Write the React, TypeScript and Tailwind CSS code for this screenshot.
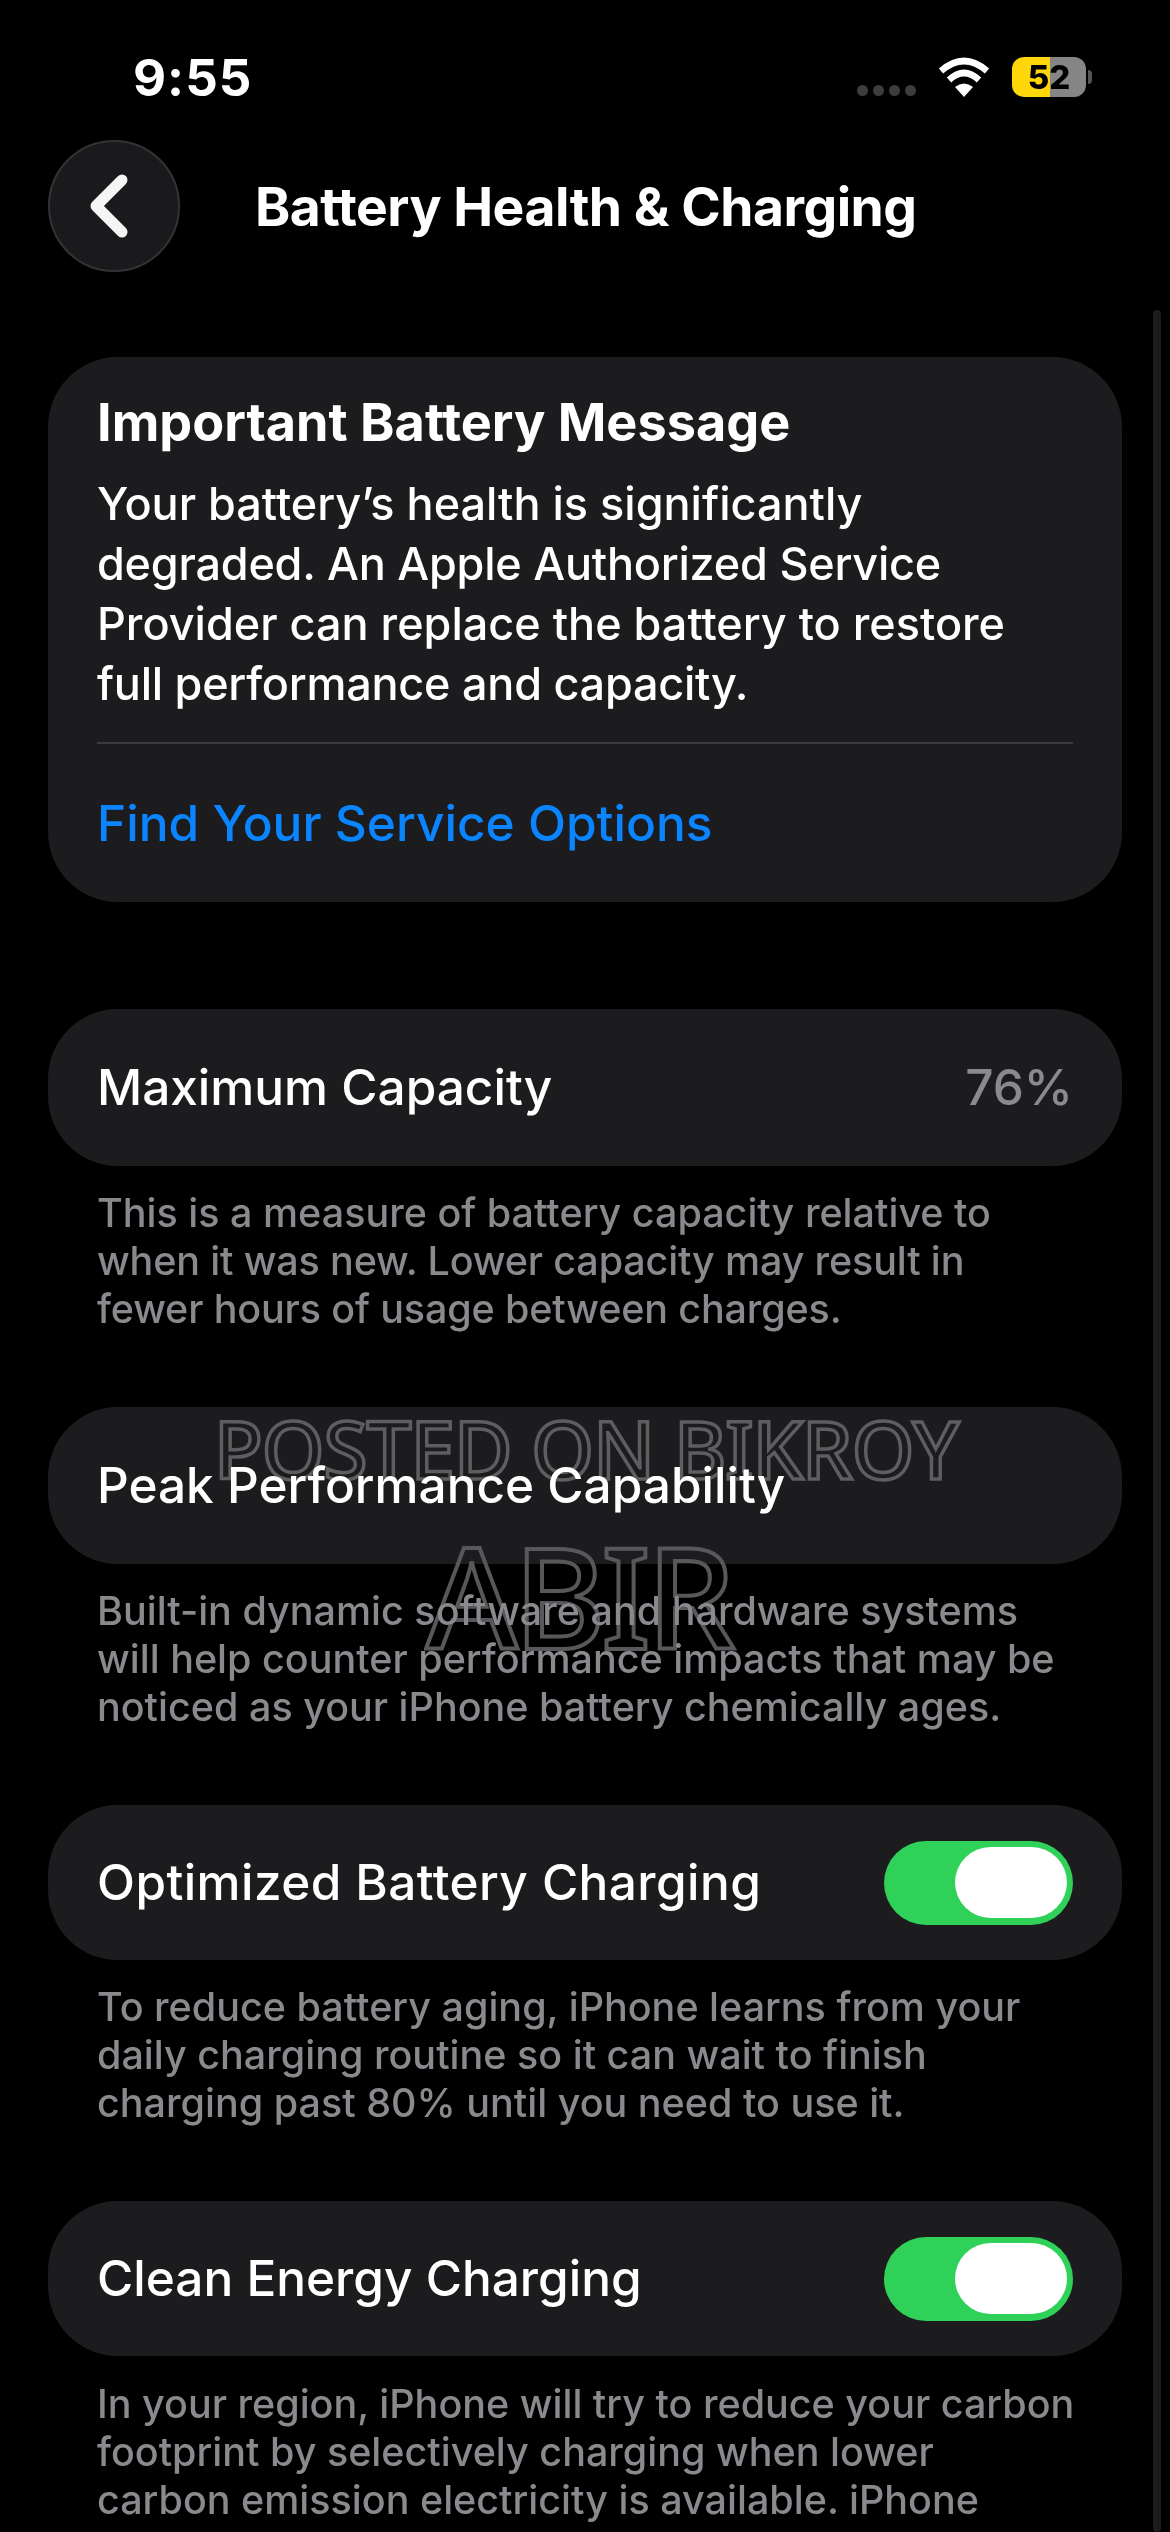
export default function App() {
  const card = "mx-12 rounded-[70px] bg-[#1c1c1e]";
  const foot = "mx-12 whitespace-nowrap px-[49px] text-[39.5px] leading-[48px] text-[#8a8a8e] font-medium";
  const Toggle = () => (
    <div className="flex h-[84px] w-[189px] items-center justify-end rounded-full bg-[#30d158] pr-[6px]">
      <div className="h-[71px] w-[112px] rounded-full bg-white" />
    </div>
  );
  return (
    <div className="relative h-[2532px] w-[1170px] overflow-hidden bg-black font-['Inter','Liberation_Sans',sans-serif] text-white">
      {/* status bar */}
      <div className="flex h-[140px] items-start justify-between pl-[133px] pr-[78px] pt-[50px]">
        <span className="text-[51px] font-bold leading-[56px] tracking-[1px]">9:55</span>
        <div className="flex items-center pt-[7px]">
          <div className="mt-[26px] mr-[22px] flex gap-[5px]">
            {[0, 1, 2, 3].map((i) => (
              <div key={i} className="h-[11px] w-[11px] rounded-full bg-[#3d3d3d]" />
            ))}
          </div>
          <svg width="52" height="40" viewBox="0 0 52 40" className="mr-[22px]">
            <path d="M26 40 L17 30 Q26 23 35 30 Z" fill="#fff" />
            <path d="M11 23 Q26 9 41 23" fill="none" stroke="#fff" strokeWidth="6.5" />
            <path d="M3 14 Q26 -6 49 14" fill="none" stroke="#fff" strokeWidth="6.5" />
          </svg>
          <div className="relative flex h-[40px] w-[74px] items-center justify-center overflow-hidden rounded-[12px] bg-[linear-gradient(90deg,#ffd60a_0%,#ffd60a_52%,#858585_52%,#858585_100%)]">
            <span className="text-[33px] font-extrabold leading-none text-black">52</span>
          </div>
          <div className="ml-[2px] h-[14px] w-[4px] rounded-r-full bg-[#555]" />
        </div>
      </div>
      {/* header */}
      <div className="flex h-[132px] items-center pl-12">
        <div className="flex h-[132px] w-[132px] items-center justify-center rounded-full border-[2px] border-[#333335] bg-[#1a1a1c]">
          <svg width="44" height="64" viewBox="0 0 44 64" className="mr-[8px]">
            <path d="M34 6 L8 32 L34 58" fill="none" stroke="#f5f5f5" strokeWidth="11" strokeLinecap="round" strokeLinejoin="round" />
          </svg>
        </div>
        <div className="ml-[75px] mt-[2px] text-[53.4px] font-bold leading-[60px] tracking-[-0.5px]">Battery Health &amp; Charging</div>
      </div>
      {/* message card */}
      <div className={`${card} mt-[85px] h-[545px] px-[49px] pt-[35px]`}>
        <div className="text-[52.2px] font-bold leading-[60px]">Important Battery Message</div>
        <div className="mt-[22px] whitespace-nowrap text-[45px] font-medium leading-[60px]">
          Your battery’s health is significantly<br />
          <span className="tracking-[-0.22px]">degraded. An Apple Authorized Service</span><br />
          Provider can replace the battery to restore<br />
          <span className="tracking-[-0.25px]">full performance and capacity.</span>
        </div>
        <div className="mt-[28px] h-[2px] bg-[#3a3a3c]" />
        <div className="mt-[49px] text-[49.6px] font-medium leading-[60px] text-[#0a84ff]">Find Your Service Options</div>
      </div>
      {/* max capacity */}
      <div className={`${card} mt-[107px] flex h-[157px] items-center justify-between px-[49px] text-[49.5px] font-medium`}>
        <span>Maximum Capacity</span>
        <span className="text-[#8a8a8e]">76%</span>
      </div>
      <div className={`${foot} mt-[23px]`}>
        This is a measure of battery capacity relative to<br />
        <span className="tracking-[-0.15px]">when it was new. Lower capacity may result in</span><br />
        <span className="tracking-[-0.15px]">fewer hours of usage between charges.</span>
      </div>
      {/* peak */}
      <div className={`${card} mt-[74px] flex h-[157px] items-center px-[49px] text-[49.5px] font-medium`}>
        <span>Peak Performance Capability</span>
      </div>
      <div className={`${foot} mt-[23px]`}>
        Built-in dynamic software and hardware systems<br />
        will help counter performance impacts that may be<br />
        noticed as your iPhone battery chemically ages.
      </div>
      {/* optimized */}
      <div className={`${card} mt-[74px] flex h-[155px] items-center justify-between px-[49px] text-[49.5px] font-medium`}>
        <span className="tracking-[0.43px]">Optimized Battery Charging</span>
        <Toggle />
      </div>
      <div className={`${foot} mt-[23px]`}>
        To reduce battery aging, iPhone learns from your<br />
        daily charging routine so it can wait to finish<br />
        charging past 80% until you need to use it.
      </div>
      {/* clean */}
      <div className={`${card} mt-[74px] flex h-[155px] items-center justify-between px-[49px] text-[49.5px] font-medium`}>
        <span>Clean Energy Charging</span>
        <Toggle />
      </div>
      <div className={`${foot} mt-[24px]`}>
        In your region, iPhone will try to reduce your carbon<br />
        footprint by selectively charging when lower<br />
        carbon emission electricity is available. iPhone
      </div>
      {/* scrollbar */}
      <div className="absolute right-[9px] top-[310px] h-[2222px] w-[8px] rounded-full bg-[#1c1c1e]" />
      {/* watermark */}
      <div className="absolute left-[214px] top-[1400px] whitespace-nowrap font-['Noto_Sans',sans-serif] text-[80px] font-medium leading-[96px] tracking-[-1px] text-transparent mix-blend-lighten [-webkit-text-stroke:3.5px_#5e5e60]">
        POSTED ON BIKROY
      </div>
      <div className="absolute left-[426px] top-[1510px] whitespace-nowrap font-['Noto_Sans',sans-serif] text-[140px] font-medium leading-[170px] tracking-[-4px] text-transparent mix-blend-lighten [-webkit-text-stroke:4px_#58585a]">
        ABIR
      </div>
    </div>
  );
}
